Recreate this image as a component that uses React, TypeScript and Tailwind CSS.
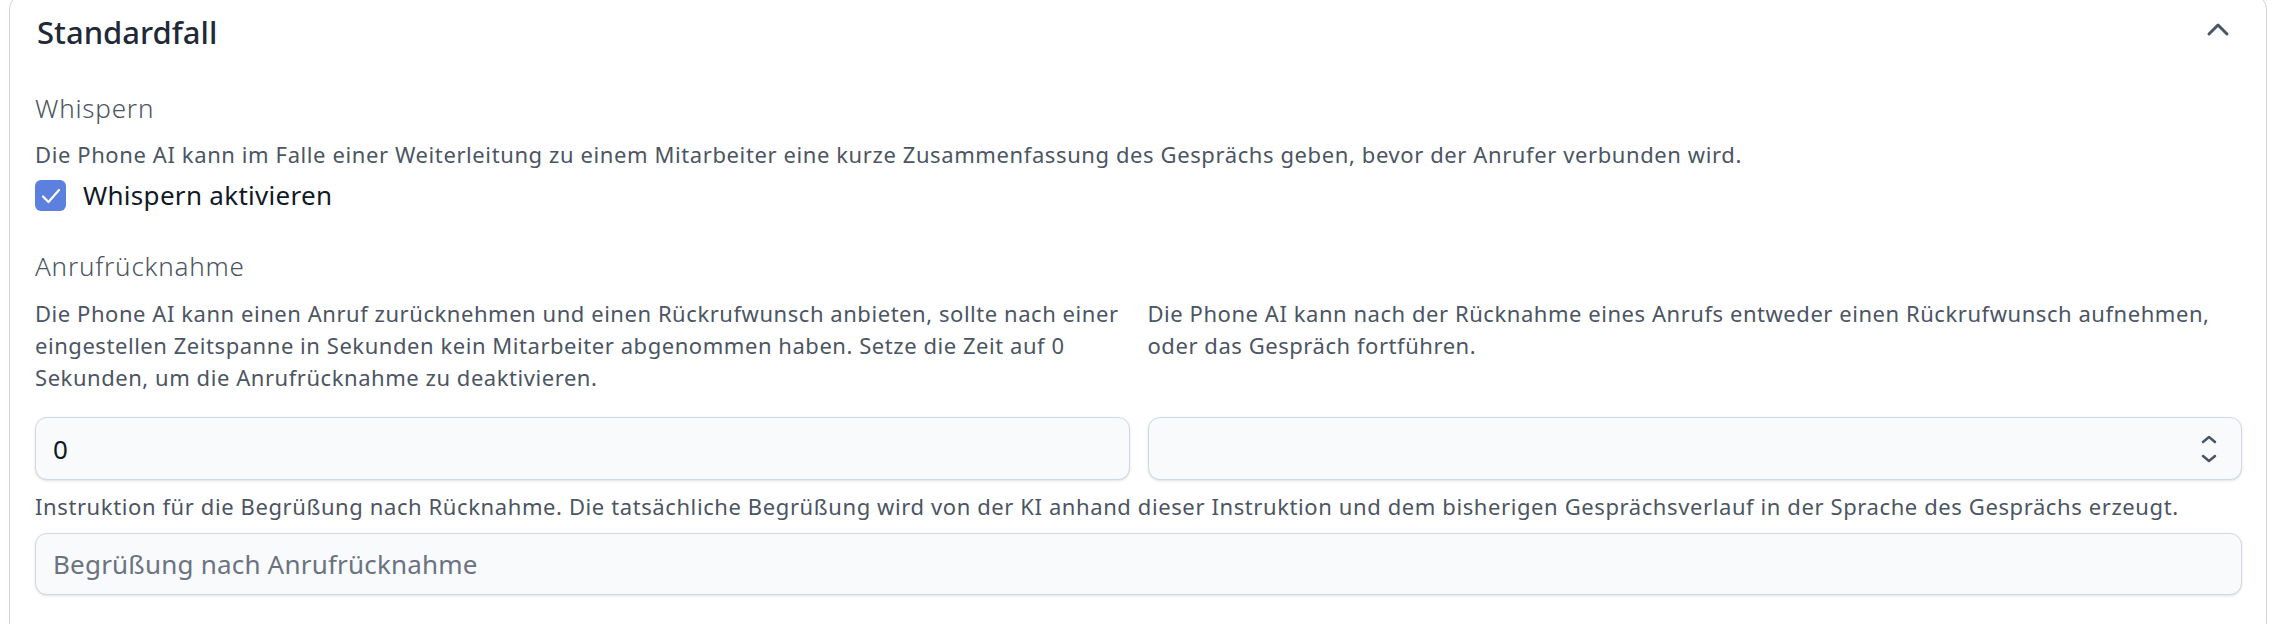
import React from 'react';

const font = { fontFamily: '"Noto Sans", Roboto, "Liberation Sans", sans-serif' };

function ChevronUp() {
  return (
    <svg width="24" height="16" viewBox="0 0 24 16" fill="none" className="text-gray-600">
      <polyline points="3,13 12,4 21,13" stroke="currentColor" strokeWidth="3" strokeLinecap="round" strokeLinejoin="round" />
    </svg>
  );
}

function UpDown() {
  return (
    <svg width="16" height="28" viewBox="0 0 16 28" fill="none" className="text-gray-600">
      <polyline points="2,7 8,2 14,7" stroke="currentColor" strokeWidth="2.5" strokeLinecap="round" strokeLinejoin="round" />
      <polyline points="2,21 8,26 14,21" stroke="currentColor" strokeWidth="2.5" strokeLinecap="round" strokeLinejoin="round" />
    </svg>
  );
}

export default function App() {
  return (
    <div className="min-h-screen bg-white px-[9px]" style={font}>
      <div className="-mt-[5px] rounded-[14px] border border-[#cbd5e1] pl-[25px] pr-[24px] pb-10 pt-[14px]">
        {/* header */}
        <div className="flex items-center justify-between">
          <h2 className="pl-[2px] text-[31px] font-medium leading-[44px] text-[#1f2937]">Standardfall</h2>
          <button className="mr-[12px] mt-[-6px]">
            <ChevronUp />
          </button>
        </div>

        {/* Whispern */}
        <div className="mt-[36px]">
          <h3 className="text-[26px] font-light leading-[36px] tracking-[0.8px] text-[#4b5563]">Whispern</h3>
          <p className="mt-[12px] text-[22px] leading-[32px] tracking-[0.6px] text-[#4b5563]">
            Die Phone AI kann im Falle einer Weiterleitung zu einem Mitarbeiter eine kurze Zusammenfassung des Gesprächs geben, bevor der Anrufer verbunden wird.
          </p>
          <label className="mt-[10px] flex items-center gap-[17px]">
            <span className="flex h-[31px] w-[31px] items-center justify-center rounded-[6px] bg-[#5b80e0]">
              <svg width="24" height="24" viewBox="0 0 24 24" fill="none">
                <polyline points="4,12.5 9.5,18 20,6" stroke="white" strokeWidth="2.2" strokeLinecap="round" strokeLinejoin="round" />
              </svg>
            </span>
            <span className="text-[26px] leading-[31px] tracking-[0.3px] text-[#111827]">Whispern aktivieren</span>
          </label>
        </div>

        {/* Anrufrücknahme */}
        <div className="mt-[37px]">
          <h3 className="text-[26px] font-light leading-[36px] tracking-[0.8px] text-[#4b5563]">Anrufrücknahme</h3>
          <div className="mt-[13px] grid grid-cols-2 gap-x-[18px]">
            <div className="flex flex-col">
              <p className="text-[22px] leading-[32px] tracking-[0.55px] text-[#4b5563]">
                Die Phone AI kann einen Anruf zurücknehmen und einen Rückrufwunsch anbieten, sollte nach einer eingestellen Zeitspanne in Sekunden kein Mitarbeiter abgenommen haben. Setze die Zeit auf 0 Sekunden, um die Anrufrücknahme zu deaktivieren.
              </p>
              <input
                type="text"
                defaultValue="0"
                className="mt-[24px] h-[63px] w-full rounded-[12px] border border-[#cfd8e3] bg-[#f8fafc] px-[17px] text-[26px] text-[#111827] shadow-sm outline-none"
              />
            </div>
            <div className="flex flex-col justify-between">
              <p className="text-[22px] leading-[32px] tracking-[0.55px] text-[#4b5563]">
                Die Phone AI kann nach der Rücknahme eines Anrufs entweder einen Rückrufwunsch aufnehmen, oder das Gespräch fortführen.
              </p>
              <div className="flex h-[63px] items-center justify-end rounded-[12px] border border-[#cfd8e3] bg-[#f8fafc] pr-[24px] shadow-sm">
                <UpDown />
              </div>
            </div>
          </div>
          <p className="mt-[10px] text-[22px] leading-[32px] tracking-[0.6px] text-[#4b5563]">
            Instruktion für die Begrüßung nach Rücknahme. Die tatsächliche Begrüßung wird von der KI anhand dieser Instruktion und dem bisherigen Gesprächsverlauf in der Sprache des Gesprächs erzeugt.
          </p>
          <input
            type="text"
            placeholder="Begrüßung nach Anrufrücknahme"
            className="mt-[11px] h-[62px] w-full rounded-[12px] border border-[#cfd8e3] bg-[#f8fafc] px-[17px] text-[26px] tracking-[0.2px] text-[#111827] shadow-sm outline-none placeholder:text-[#6b7280]"
          />
        </div>
      </div>
    </div>
  );
}
